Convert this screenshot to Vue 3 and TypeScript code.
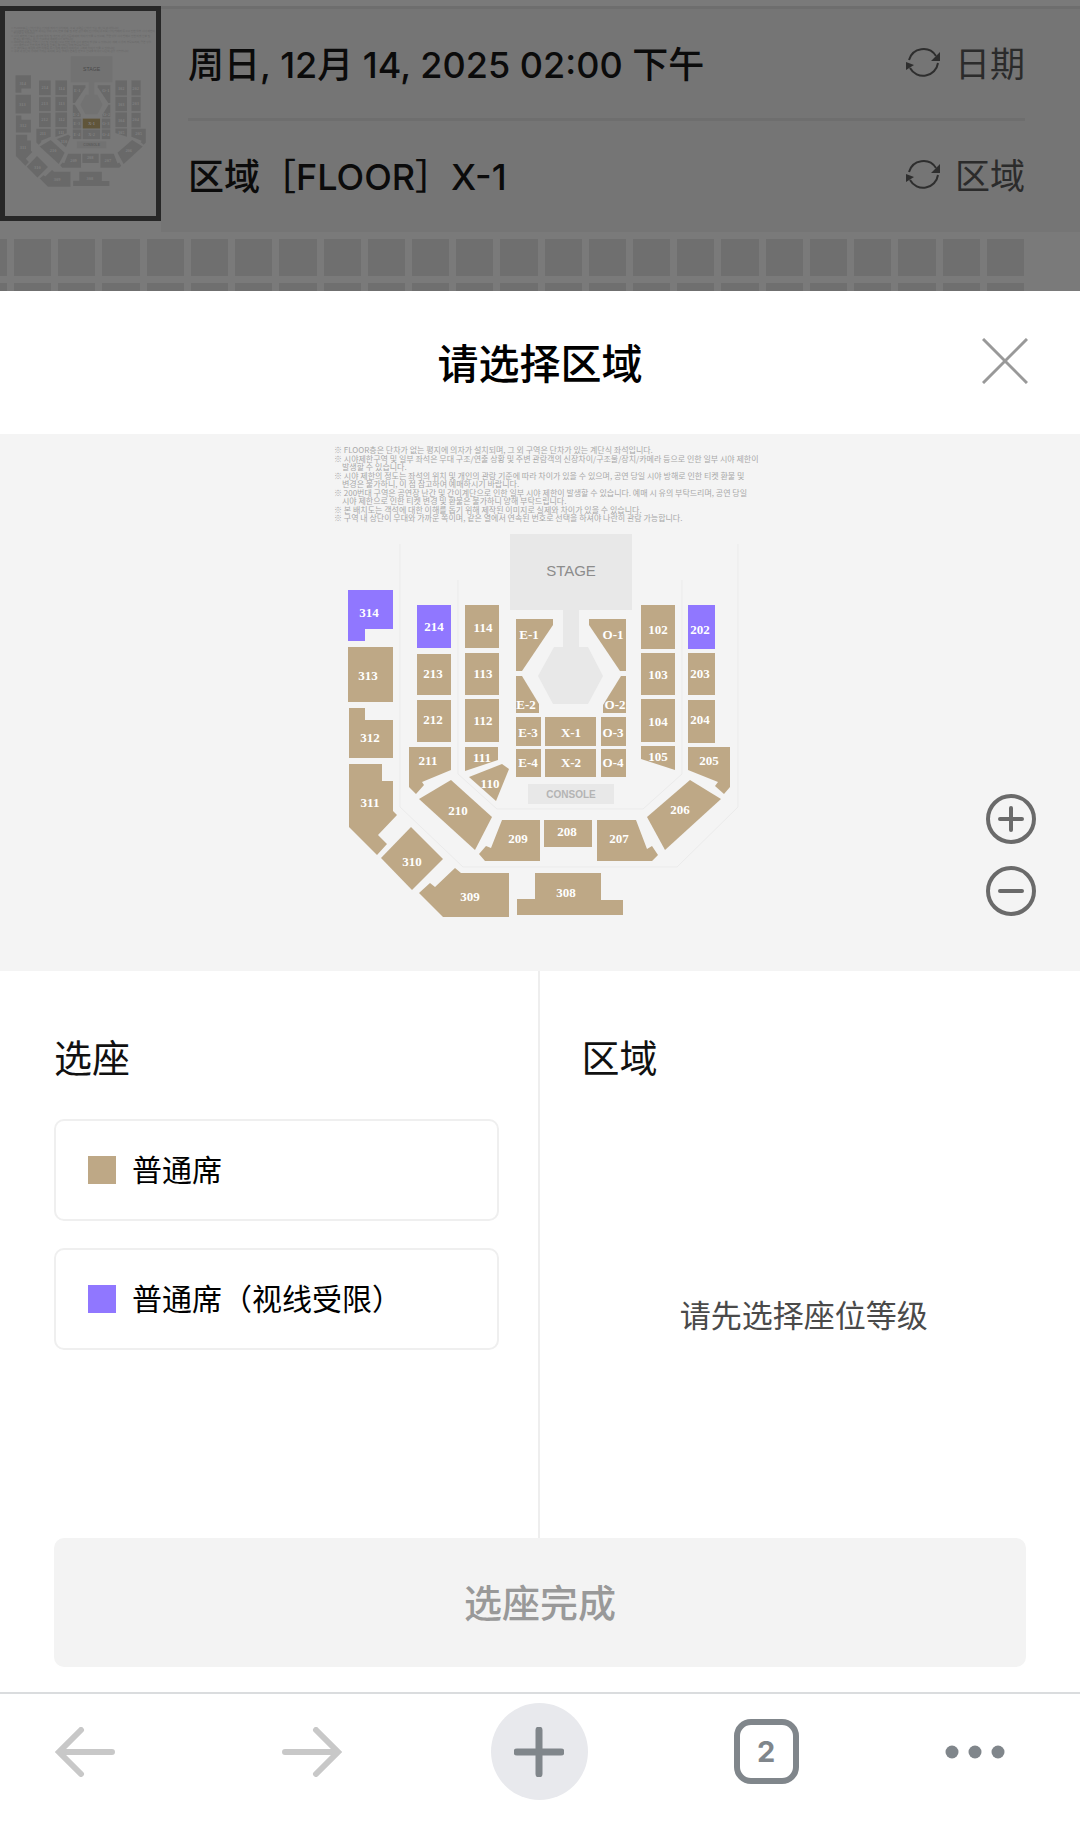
<script setup lang="ts">
import { ref } from 'vue'

interface Section {
  id: string
  points: string
  x: number
  y: number
  limited?: boolean
}

// Axis-aligned block given by its left, top, right and bottom edges.
const box = (l: number, t: number, r: number, b: number): string =>
  `${l},${t} ${r},${t} ${r},${b} ${l},${b}`

const sections: Section[] = [
  { id: '314', points: '28,156 73,156 73,195 45,195 45,207 28,207', x: 49, y: 179, limited: true },
  { id: '313', points: box(28, 213, 73, 268), x: 48, y: 242 },
  { id: '312', points: '29,274 45,274 45,286 73,286 73,324 29,324', x: 50, y: 304 },
  { id: '311', points: '29,330 62,330 62,347 73,347 73,377 77,381 58,401 67,410 57,421 29,393', x: 50, y: 369 },
  { id: '310', points: '91,393 123,425 92,456 61,424', x: 92, y: 428 },
  { id: '309', points: '135,434 141,439 189,439 189,483 123,483 99,459 110,449 115,453', x: 150, y: 463 },
  { id: '308', points: '215,439 281,439 281,466 303,466 303,481 197,481 197,465 215,465', x: 246, y: 459 },
  { id: '214', points: box(97, 171, 131, 214), x: 114, y: 193, limited: true },
  { id: '213', points: box(97, 220, 131, 261), x: 113, y: 240 },
  { id: '212', points: box(97, 266, 131, 308), x: 113, y: 286 },
  { id: '211', points: '89,313 131,313 131,336 102,348 104,351 96,360 89,353', x: 108, y: 327 },
  { id: '114', points: box(145, 171, 179, 214), x: 163, y: 194 },
  { id: '113', points: box(145, 219, 179, 261), x: 163, y: 240 },
  { id: '112', points: box(145, 265, 179, 308), x: 163, y: 287 },
  { id: '111', points: '145,313 178,313 178,326 145,337', x: 162, y: 324 },
  { id: '110', points: '182,330 189,335 176,367 149,343', x: 170, y: 350 },
  { id: '210', points: '131,346 172,383 155,416 99,365', x: 138, y: 377 },
  { id: '209', points: '182,386 220,386 220,427 165,427 159,420 166,412 171,414', x: 198, y: 405 },
  { id: '208', points: box(224, 386, 272, 413), x: 247, y: 398 },
  { id: '207', points: '277,386 316,386 327,415 332,412 338,421 332,427 277,427', x: 299, y: 405 },
  { id: '206', points: '370,346 401,365 345,416 327,383', x: 360, y: 376 },
  { id: '205', points: '368,313 410,313 410,353 404,360 395,352 398,348 368,336', x: 389, y: 327 },
  { id: '204', points: box(368, 266, 395, 309), x: 380, y: 286 },
  { id: '203', points: box(368, 219, 395, 261), x: 380, y: 240 },
  { id: '202', points: box(368, 171, 395, 215), x: 380, y: 196, limited: true },
  { id: '102', points: box(321, 171, 355, 215), x: 338, y: 196 },
  { id: '103', points: box(321, 219, 355, 261), x: 338, y: 241 },
  { id: '104', points: box(321, 265, 355, 308), x: 338, y: 288 },
  { id: '105', points: '321,312 355,312 355,336 321,325', x: 338, y: 323 },
  { id: 'E-1', points: '196,185 233,185 233,191 202,237 196,237', x: 209, y: 201 },
  { id: 'O-1', points: '269,185 306,185 306,237 300,237 269,191', x: 293, y: 201 },
  { id: 'E-2', points: '196,242 202,242 219,270 219,279 196,279', x: 206, y: 271 },
  { id: 'O-2', points: '301,242 306,242 306,279 283,279 283,271', x: 295, y: 271 },
  { id: 'E-3', points: box(196, 283, 221, 312), x: 208, y: 299 },
  { id: 'X-1', points: box(225, 283, 276, 312), x: 251, y: 299 },
  { id: 'O-3', points: box(281, 283, 306, 312), x: 293, y: 299 },
  { id: 'E-4', points: box(196, 315, 221, 343), x: 208, y: 329 },
  { id: 'X-2', points: box(225, 315, 276, 343), x: 251, y: 329 },
  { id: 'O-4', points: box(281, 315, 306, 343), x: 293, y: 329 },
]

const notes: { text: string; y: number; cont?: boolean }[] = [
  { y: 19, text: '※ FLOOR층은 단차가 없는 평지에 의자가 설치되며, 그 외 구역은 단차가 있는 계단식 좌석입니다.' },
  { y: 28, text: '※ 시야제한구역 및 일부 좌석은 무대 구조/연출 상황 및 주변 관람객의 신장차이/구조물/장치/카메라 등으로 인한 일부 시야 제한이' },
  { y: 36, cont: true, text: '발생할 수 있습니다.' },
  { y: 45, text: '※ 시야 제한의 정도는 좌석의 위치 및 개인의 관람 기준에 따라 차이가 있을 수 있으며, 공연 당일 시야 방해로 인한 티켓 환불 및' },
  { y: 53, cont: true, text: '변경은 불가하니, 이 점 참고하여 예매하시기 바랍니다.' },
  { y: 62, text: '※ 200번대 구역은 공연장 난간 및 간이계단으로 인한 일부 시야 제한이 발생할 수 있습니다. 예매 시 유의 부탁드리며, 공연 당일' },
  { y: 70, cont: true, text: '시야 제한으로 인한 티켓 변경 및 환불은 불가하니 양해 부탁드립니다.' },
  { y: 79, text: '※ 본 배치도는 객석에 대한 이해를 돕기 위해 제작된 이미지로 실제와 차이가 있을 수 있습니다.' },
  { y: 87, text: '※ 구역 내 상단이 무대와 가까운 쪽이며, 같은 열에서 연속된 번호로 선택을 하셔야 나란히 관람 가능합니다.' },
]

const summary = [
  { text: '周日, 12月 14, 2025 02:00 下午', action: '日期' },
  { text: '区域［FLOOR］X-1', action: '区域' },
]

const grades = [
  { id: 'normal', name: '普通席' },
  { id: 'limited', name: '普通席（视线受限）' },
]

const current = 'X-1'
const picked = ref<string | null>(null)
</script>

<template>
  <div class="page">
    <header class="backdrop">
      <div class="summary">
        <div class="thumb-cell">
          <svg class="map thumb" viewBox="-3 -31 443 598" aria-hidden="true">
            <text v-for="n in notes" :key="n.y" class="note" :x="n.cont ? 22 : 14" :y="n.y">{{ n.text }}</text>
            <path class="stage" d="M190 100H312V176H259V213H268L283 242L268 270H233L218 242L234 213H243V176H190Z" />
            <rect class="stage" x="208" y="350" width="86" height="20" />
            <text class="stage-label" x="251" y="142">STAGE</text>
            <text class="console-label" x="251" y="364">CONSOLE</text>
            <g v-for="s in sections" :key="s.id">
              <polygon :class="['block', { current: s.id === current }]" :points="s.points" />
              <text class="label" :x="s.x" :y="s.y + 4">{{ s.id }}</text>
            </g>
          </svg>
        </div>
        <div class="rows">
          <div v-for="row in summary" :key="row.action" class="row">
            <span class="raised">{{ row.text }}</span>
            <button type="button" class="change">
              <svg viewBox="0 0 34 34" width="34" height="34" aria-hidden="true">
                <path d="M3 13A15 15 0 0 1 30 9M32 16A15 15 0 0 1 4 21" fill="none" stroke="#2e2e2e" stroke-width="2" />
                <path d="M34 5V14H25ZM0 15L8 18L0 23Z" fill="#2e2e2e" />
              </svg>
              <span class="raised">{{ row.action }}</span>
            </button>
          </div>
        </div>
      </div>
      <div class="seats">
        <i v-for="n in 48" :key="n"></i>
      </div>
    </header>

    <main class="sheet">
      <div class="sheet-head">
        <h1 class="raised">请选择区域</h1>
        <button type="button" class="close" aria-label="关闭">
          <svg viewBox="0 0 46 46" width="46" height="46"><path d="M1 1L45 45M45 1L1 45" stroke="#999" stroke-width="3" /></svg>
        </button>
      </div>

      <section class="map-area">
        <svg class="map main" viewBox="0 0 440 537" role="img" aria-label="座位图">
          <path class="outline" d="M80 110V373L143 433H357L418 373V110M138 146V340L177 375H323L362 340V146" />
          <text v-for="n in notes" :key="n.y" class="note" :x="n.cont ? 22 : 14" :y="n.y">{{ n.text }}</text>
          <path class="stage" d="M190 100H312V176H259V213H268L283 242L268 270H233L218 242L234 213H243V176H190Z" />
          <rect class="stage" x="208" y="350" width="86" height="20" />
          <text class="stage-label" x="251" y="142">STAGE</text>
          <text class="console-label" x="251" y="364">CONSOLE</text>
          <g v-for="s in sections" :key="s.id">
            <polygon :class="['block', { limited: s.limited }]" :points="s.points" />
            <text class="label" :x="s.x" :y="s.y + 4">{{ s.id }}</text>
          </g>
        </svg>
        <div class="zoom">
          <button type="button" aria-label="放大">
            <svg viewBox="0 0 50 50" width="50" height="50"><circle cx="25" cy="25" r="23" /><path d="M14 25H36M25 14V36" /></svg>
          </button>
          <button type="button" aria-label="缩小">
            <svg viewBox="0 0 50 50" width="50" height="50"><circle cx="25" cy="25" r="23" /><path d="M14 25H36" /></svg>
          </button>
        </div>
      </section>

      <div class="columns">
        <section class="column">
          <h2>选座</h2>
          <div class="grades">
            <button v-for="g in grades" :key="g.id" type="button" class="grade" :aria-pressed="picked === g.id" @click="picked = g.id">
              <span :class="['swatch', g.id]"></span>
              <span class="raised">{{ g.name }}</span>
            </button>
          </div>
        </section>
        <section class="column">
          <h2>区域</h2>
          <p class="hint">请先选择座位等级</p>
        </section>
      </div>

      <div class="submit"><button type="button" disabled><span class="raised">选座完成</span></button></div>
    </main>

    <nav class="browser-bar">
      <button type="button" aria-label="后退">
        <svg viewBox="0 0 60 50" width="60" height="50"><path class="arrow" d="M57 25H5M26 3L4 25L26 47" /></svg>
      </button>
      <button type="button" aria-label="前进">
        <svg viewBox="0 0 60 50" width="60" height="50"><path class="arrow" d="M3 25H55M34 3L56 25L34 47" /></svg>
      </button>
      <button type="button" class="add" aria-label="新标签页">
        <svg viewBox="0 0 50 50" width="50" height="50"><path d="M3 25H47M25 3V47" stroke="#80868b" stroke-width="7" stroke-linecap="round" /></svg>
      </button>
      <button type="button" aria-label="标签页"><span class="tabs">2</span></button>
      <button type="button" class="more" aria-label="更多">
        <svg viewBox="0 0 60 14" width="60" height="14" fill="#80868b"><circle cx="7" cy="7" r="6.500" /><circle cx="30" cy="7" r="6.500" /><circle cx="53" cy="7" r="6.500" /></svg>
      </button>
    </nav>
  </div>
</template>

<style>
body {
  background: #fff;
}
</style>

<style scoped>
.page {
  font-family: Inter, "Noto Sans CJK SC", sans-serif;
  color: #000;
}

button {
  font: inherit;
  color: inherit;
  background: none;
  border: 0;
  padding: 0;
}

svg {
  display: block;
}

h1, h2, p {
  margin: 0;
}

/* Lifts CJK glyphs to the optical centre of their row. */
.raised {
  padding-bottom: 4px;
}

.backdrop {
  height: 285px;
  padding-top: 6px;
  overflow: hidden;
  background: #7a7a7a;
}

.summary {
  display: flex;
  height: 226px;
}

.thumb-cell {
  width: 161px;
}

.thumb {
  box-sizing: border-box;
  width: 161px;
  height: 215px;
  border: 5px solid #272727;
  background: #787878;
}

.rows {
  flex: 1;
  box-sizing: border-box;
  padding: 0 55px 0 27px;
  background: #757575;
  border-top: 3px solid #6e6e6e;
}

.row {
  display: flex;
  align-items: center;
  justify-content: space-between;
  height: 109px;
  font-size: 36px;
  font-weight: 500;
  color: #0b0b0b;
}

.row + .row {
  border-top: 3px solid #6e6e6e;
}

.change {
  display: flex;
  align-items: center;
  gap: 15px;
  font-size: 35px;
  font-weight: 400;
  color: #2b2b2b;
}

.seats {
  display: grid;
  grid-template-columns: 7px repeat(23, 1fr);
  grid-auto-rows: 37px;
  gap: 7px;
  padding: 7px 56px 0 0;
}

.seats i {
  background: #6f6f6f;
}

.sheet {
  background: #fff;
}

.sheet-head {
  display: flex;
  align-items: center;
  justify-content: center;
  position: relative;
  height: 143px;
}

h1 {
  font-size: 41px;
  font-weight: 500;
}

.close {
  position: absolute;
  right: 52px;
  top: 47px;
}

.map-area {
  position: relative;
  background: #f4f4f4;
}

.main {
  width: 440px;
  max-width: 100%;
  margin: 0 auto;
}

.outline {
  fill: none;
  stroke: #ebebeb;
  stroke-width: 1px;
}

.note {
  font-family: "Noto Sans CJK KR", sans-serif;
  font-size: 8px;
  fill: #a8a8a8;
}

.stage {
  fill: #e8e8e8;
}

.stage-label, .console-label {
  font-family: "Liberation Sans", Arial, sans-serif;
  text-anchor: middle;
}

.stage-label {
  font-size: 15px;
  fill: #8c8c8c;
}

.console-label {
  font-size: 10px;
  font-weight: 700;
  fill: #b4b4b4;
}

.block {
  fill: #bea886;
}

.block.limited {
  fill: #9077ff;
}

.label {
  font-family: "Liberation Serif", "Times New Roman", serif;
  font-size: 13px;
  font-weight: 700;
  text-anchor: middle;
  fill: #fff;
}

.thumb .block {
  fill: #696969;
}

.thumb .block.current {
  fill: #60553a;
}

.thumb .label {
  fill: #808080;
}

.thumb .stage {
  fill: #727272;
}

.thumb .note {
  fill: #686868;
}

.thumb .stage-label {
  fill: #484848;
}

.thumb .console-label {
  fill: #5c5c5c;
}

.zoom {
  position: absolute;
  right: 44px;
  bottom: 55px;
  display: flex;
  flex-direction: column;
  gap: 22px;
}

.zoom svg {
  fill: none;
  stroke: #6a6a6a;
  stroke-width: 4px;
  stroke-linecap: round;
}

.columns {
  display: flex;
  min-height: 567px;
}

.column {
  flex: 1;
  display: flex;
  flex-direction: column;
  box-sizing: border-box;
  padding: 57px 54px 0 42px;
}

.column:first-child {
  padding: 57px 39px 0 54px;
  border-right: 2px solid #eee;
}

h2 {
  height: 60px;
  line-height: 60px;
  font-size: 38px;
  font-weight: 400;
  color: #111;
}

.grades {
  display: flex;
  flex-direction: column;
  gap: 27px;
  padding-top: 31px;
}

.grade {
  display: flex;
  align-items: center;
  gap: 16px;
  height: 102px;
  padding: 0 32px;
  border: 2px solid #efefef;
  border-radius: 10px;
  font-size: 30px;
}

.swatch {
  width: 28px;
  height: 28px;
  background: #bea886;
}

.swatch.limited {
  background: #9077ff;
}

.hint {
  flex: 1;
  display: flex;
  align-items: center;
  justify-content: center;
  font-size: 31px;
  color: #4a4a4a;
}

.submit {
  padding: 0 54px 25px;
}

.submit button {
  display: flex;
  align-items: center;
  justify-content: center;
  width: 100%;
  height: 129px;
  border-radius: 10px;
  background: #f3f3f3;
  color: #999;
  font-size: 38px;
  font-weight: 500;
}

.browser-bar {
  display: flex;
  align-items: center;
  justify-content: space-between;
  padding: 9px 75px 37px 36px;
  border-top: 2px solid #dadcde;
}

.browser-bar button {
  display: flex;
  align-items: center;
  justify-content: center;
  width: 97px;
  height: 97px;
}

.browser-bar .more {
  width: 60px;
}

.arrow {
  fill: none;
  stroke: #c8c8c8;
  stroke-width: 6px;
  stroke-linecap: round;
}

.browser-bar .add {
  border-radius: 50%;
  background: #e8e9ed;
}

.tabs {
  box-sizing: border-box;
  width: 65px;
  height: 65px;
  border: 6px solid #80868b;
  border-radius: 17px;
  line-height: 54px;
  text-align: center;
  font-size: 29px;
  font-weight: 700;
  color: #80868b;
}
</style>
